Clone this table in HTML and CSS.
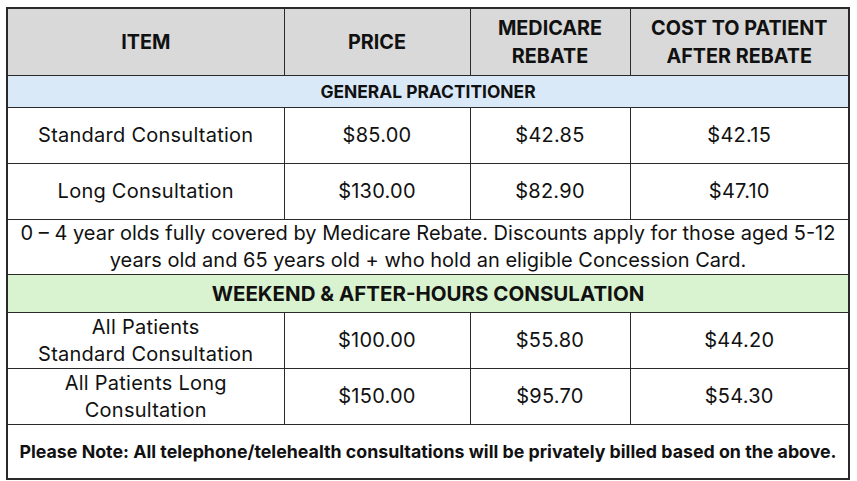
FILE: index.html
```html
<!DOCTYPE html>
<html>
<head>
<meta charset="utf-8">
<link rel="stylesheet" href="styles.css">
</head>
<body>
<table class="fees">
  <colgroup>
    <col class="c1"><col class="c2"><col class="c3"><col class="c4">
  </colgroup>
  <tr class="head">
    <th>ITEM</th>
    <th>PRICE</th>
    <th>MEDICARE<br>REBATE</th>
    <th>COST TO PATIENT<br>AFTER REBATE</th>
  </tr>
  <tr class="band blue"><td colspan="4">GENERAL PRACTITIONER</td></tr>
  <tr class="row"><td>Standard Consultation</td><td>$85.00</td><td>$42.85</td><td>$42.15</td></tr>
  <tr class="row"><td>Long Consultation</td><td>$130.00</td><td>$82.90</td><td>$47.10</td></tr>
  <tr class="note"><td colspan="4">0 – 4 year olds fully covered by Medicare Rebate. Discounts apply for those aged 5-12<br>years old and 65 years old + who hold an eligible Concession Card.</td></tr>
  <tr class="band green"><td colspan="4">WEEKEND &amp; AFTER-HOURS CONSULATION</td></tr>
  <tr class="row"><td>All Patients<br>Standard Consultation</td><td>$100.00</td><td>$55.80</td><td>$44.20</td></tr>
  <tr class="row"><td>All Patients Long<br>Consultation</td><td>$150.00</td><td>$95.70</td><td>$54.30</td></tr>
  <tr class="foot"><td colspan="4">Please Note: All telephone/telehealth consultations will be privately billed based on the above.</td></tr>
</table>
</body>
</html>
```
FILE: styles.css
```css
html, body {
  margin: 0;
  padding: 0;
  background: #ffffff;
}
body {
  padding: 7px 0 0 6px;
  font-family: "Inter", "Liberation Sans", sans-serif;
  color: #111;
}
.fees {
  border-collapse: collapse;
  table-layout: fixed;
  width: 844px;
  border: 2px solid #2a2a2a;
}
.c1 { width: 277px; }
.c2 { width: 186px; }
.c3 { width: 160px; }
.c4 { width: 219px; }
.fees th, .fees td {
  border: 1.5px solid #2a2a2a;
  text-align: center;
  vertical-align: middle;
  padding: 0;
}
.head th {
  height: 66px;
  background: #d9d9d9;
  font-size: 19.8px;
  font-weight: 700;
  line-height: 28px;
}
.band td {
  font-weight: 700;
}
.blue td {
  height: 31px;
  background: #dae9f8;
  font-size: 17.4px;
}
.green td {
  height: 37px;
  background: #d9f2d0;
  font-size: 20.5px;
}
.row td {
  height: 55px;
  font-size: 20px;
  letter-spacing: 0.25px;
  line-height: 27px;
}
.note td {
  height: 54px;
  font-size: 20px;
  line-height: 27px;
}
.foot td {
  height: 53px;
  font-size: 17.8px;
  font-weight: 700;
}
```
